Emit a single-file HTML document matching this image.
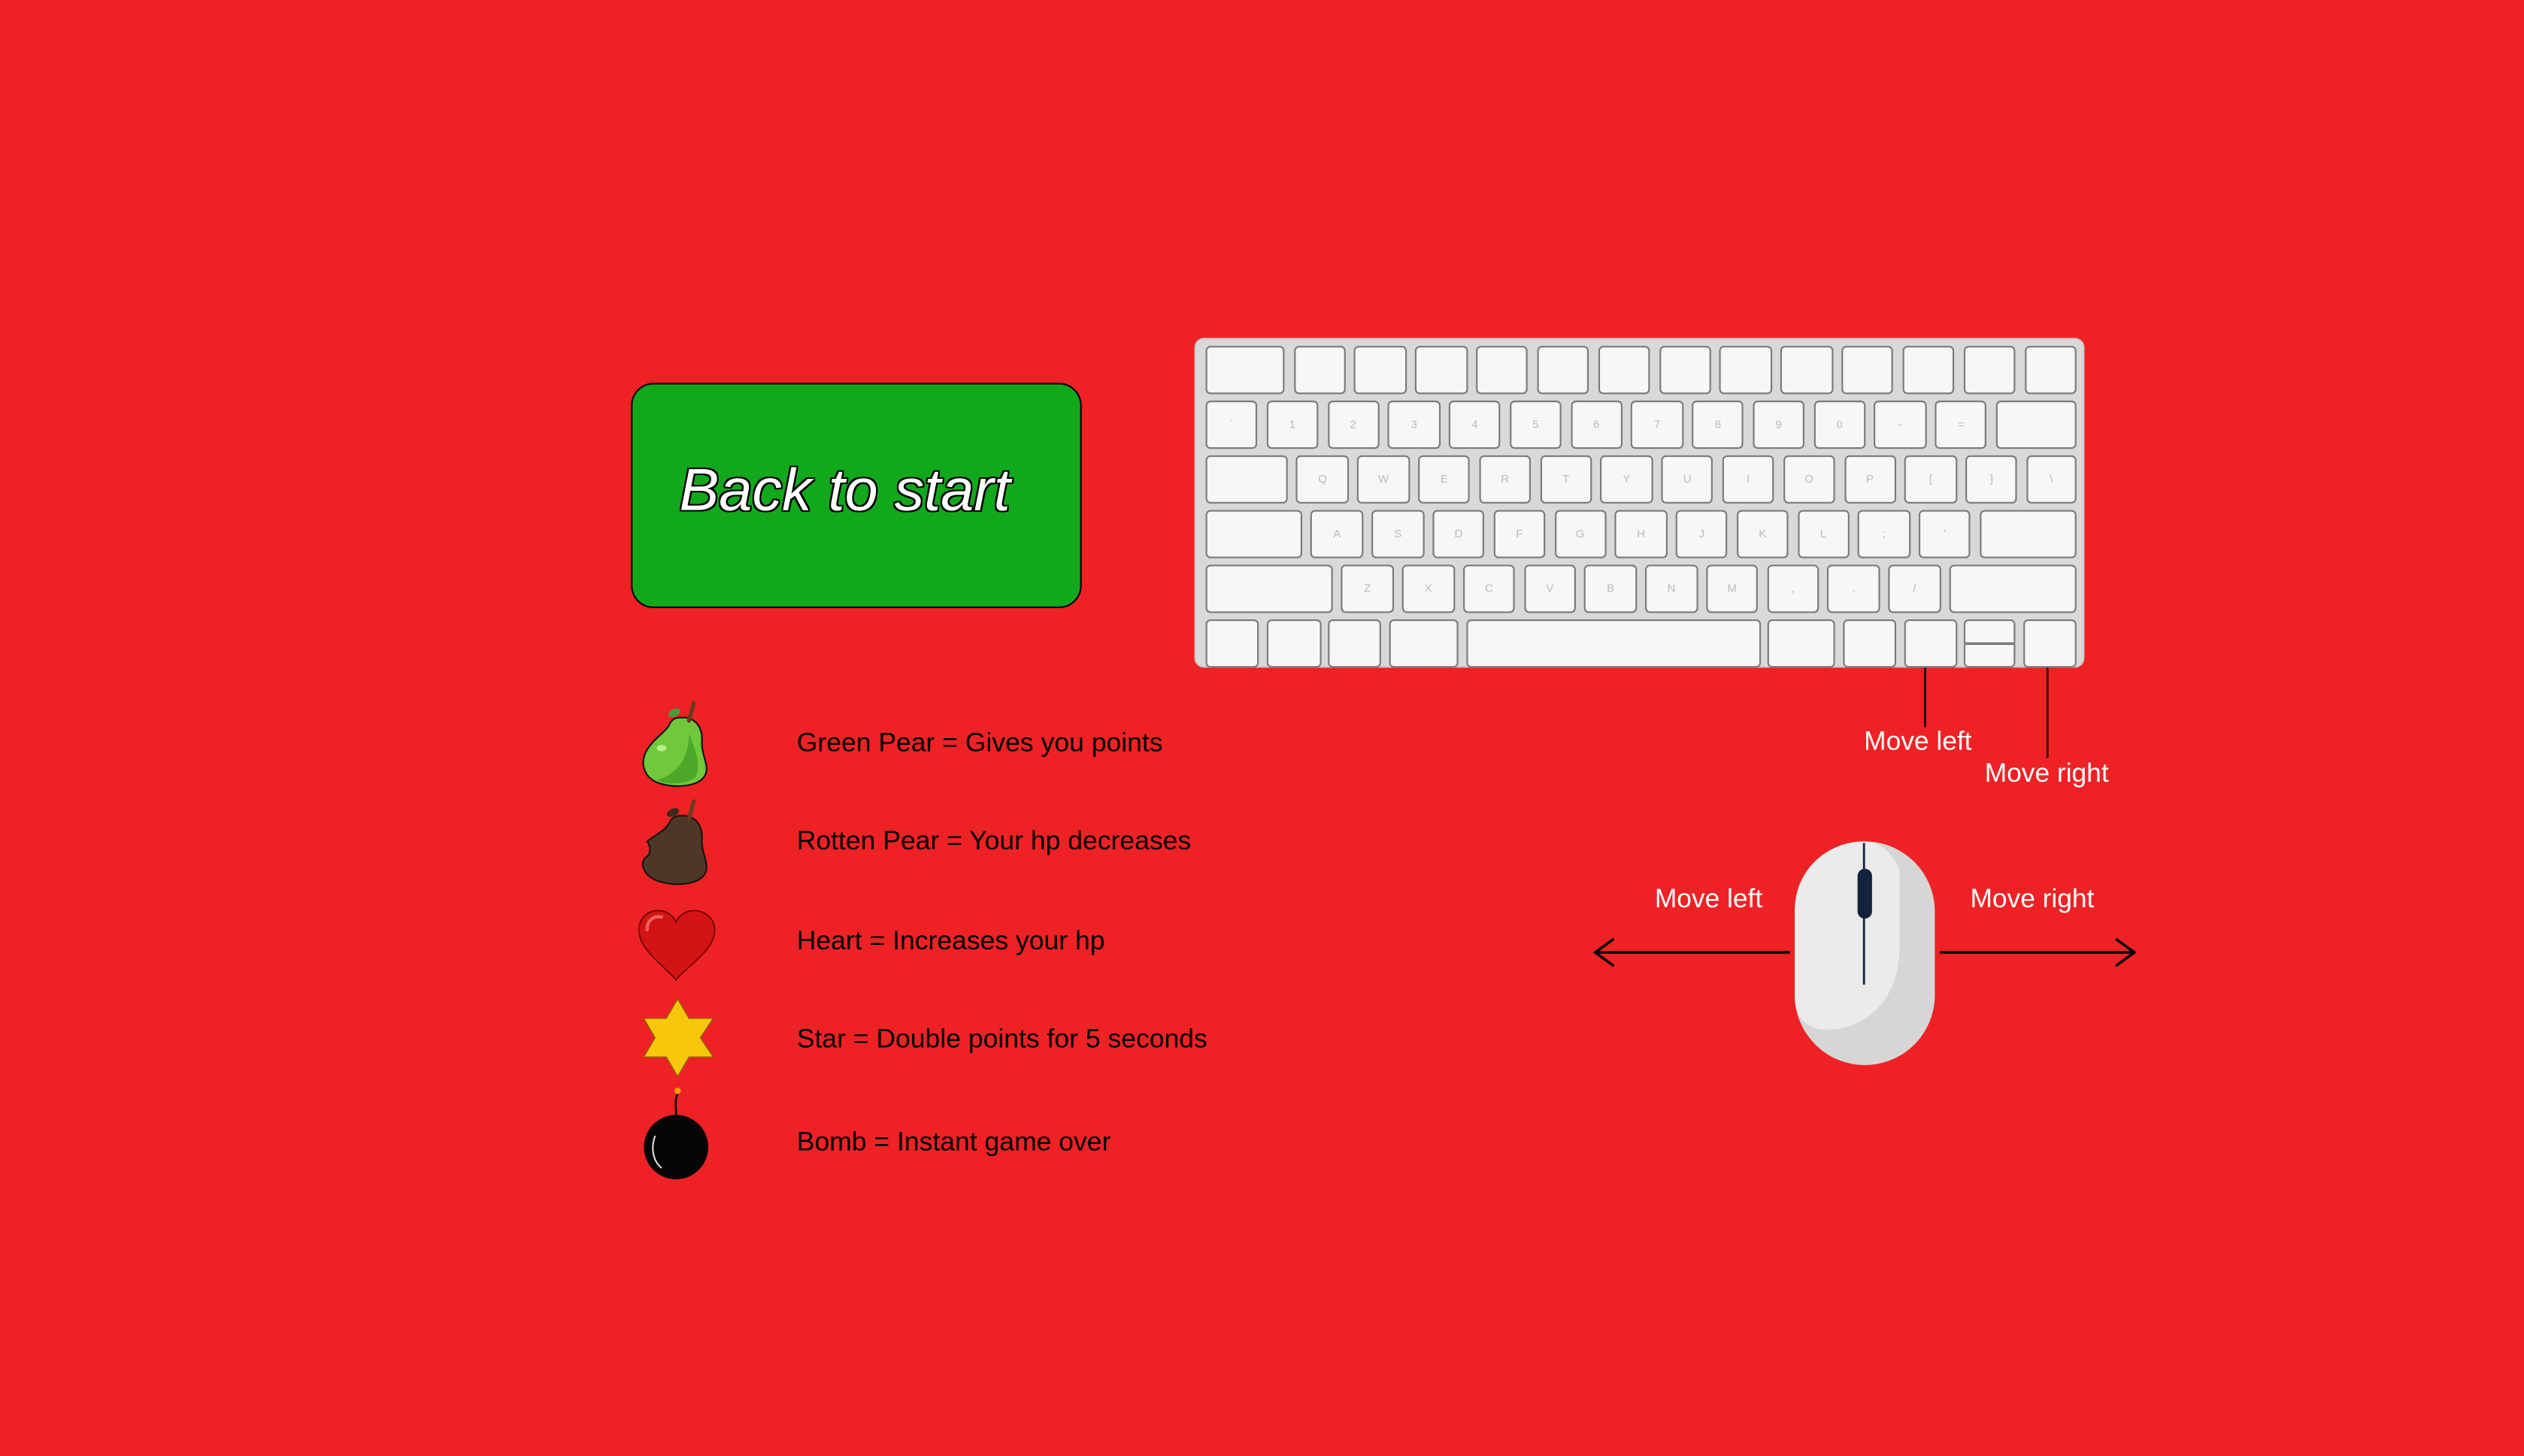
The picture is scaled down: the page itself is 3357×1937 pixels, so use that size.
<!DOCTYPE html>
<html><head><meta charset="utf-8"><style>
html,body{margin:0;padding:0;}
body{width:3357px;height:1937px;background:#ee2225;overflow:hidden;font-family:"Liberation Sans",Arial,sans-serif;}
#s{position:absolute;left:0;top:0;width:1568px;height:905px;transform:scale(2.1409,2.1403);transform-origin:0 0;}
.a{position:absolute;}
.btn{left:392px;top:238px;width:278px;height:138px;background:#12a81c;border:1px solid #000;border-radius:14px;}
.btn span{position:absolute;left:29px;top:45px;font-size:37px;font-style:italic;color:#fff;text-shadow:1px 1px 0 #000,-1px -1px 0 #000,1px -1px 0 #000,-1px 1px 0 #000,0 1px 0 #000,1px 0 0 #000,0 -1px 0 #000,-1px 0 0 #000;}
.t{font-size:16.6px;color:#000;left:495px;}
.w{font-size:16.5px;color:#fff;}
.kb{left:742px;top:210px;width:551px;height:203px;background:#d9d9d9;border:1px solid #c8c8c8;border-radius:6px;}
.row{position:absolute;left:6px;width:541px;height:30px;display:flex;justify-content:space-between;}
.k{background:#f7f7f7;border:1px solid #7a7a7a;border-radius:3px;box-sizing:border-box;height:30px;font-size:7px;color:#bbb;text-align:center;line-height:30px;}
.k.s{width:32.3px;}
</style></head><body><div id="s">
<div class="a btn"><span>Back to start</span></div>

<div class="a t" style="top:452px">Green Pear = Gives you points</div>
<div class="a t" style="top:513px">Rotten Pear = Your hp decreases</div>
<div class="a t" style="top:575px">Heart = Increases your hp</div>
<div class="a t" style="top:636px">Star = Double points for 5 seconds</div>
<div class="a t" style="top:700px">Bomb = Instant game over</div>

<svg class="a" style="left:0;top:0" width="1568" height="905" viewBox="0 0 1568 905">
 <g>
  <path d="M424,446 C432,446 437,452 436,462 C436,470 441,476 438,482 C434,489 420,490 410,487 C400,484 397,474 402,466 C407,458 414,455 416,450 C418,446 421,446 424,446 Z" fill="#6fc93a" stroke="#111" stroke-width="1"/>
  <path d="M428,456 C432,466 436,476 432,483 C426,488 414,488 408,485 C418,482 428,474 428,456Z" fill="#4da728"/>
  <ellipse cx="411" cy="465" rx="3" ry="2" fill="#b9ee8a"/>
  <line x1="428" y1="448" x2="431" y2="437" stroke="#6b3a1e" stroke-width="2.5" stroke-linecap="round"/>
  <ellipse cx="419" cy="443" rx="4" ry="2.3" fill="#4a9a3a" transform="rotate(-25 419 443)"/>
 </g>
 <g transform="translate(0,61)">
  <path d="M424,446 C432,446 437,452 436,462 C436,470 441,476 438,482 C434,489 420,490 410,487 C400,484 397,476 401,472 C405,470 404,464 402,462 C407,458 414,455 416,450 C418,446 421,446 424,446 Z" fill="#4d3827" stroke="#1a120b" stroke-width="1"/>
  <line x1="428" y1="448" x2="431" y2="437" stroke="#6b3a1e" stroke-width="2.5" stroke-linecap="round"/>
  <ellipse cx="418" cy="444" rx="4" ry="2.3" fill="#3d2a1c" transform="rotate(-25 418 444)"/>
 </g>
 <path d="M420,609 C410,598 397,590 397,578 C397,570 403,566 409,566 C414,566 418,569 420,573 C422,569 426,566 431,566 C438,566 444,571 444,578 C444,590 430,598 420,609Z" fill="#d41414" stroke="#6a0000" stroke-width="0.8"/>
 <path d="M402,578 C402,572 406,569 411,570" stroke="#f06060" stroke-width="2" fill="none" stroke-linecap="round"/>
 <path d="M421,621 L428,633 L443,633 L435,645 L443,657 L428,657 L421,669 L414,657 L400,657 L407,645 L400,633 L414,633 Z" fill="#f6c70a" stroke="#8a6a00" stroke-width="0.6"/>
 <circle cx="420" cy="713" r="20" fill="#050505"/>
 <path d="M407,706 C404,714 406,722 411,726" stroke="#ddd" stroke-width="1" fill="none"/>
 <path d="M420,693 C420,688 419,684 421,680" stroke="#000" stroke-width="1.2" fill="none"/>
 <circle cx="421" cy="678" r="2" fill="#ff9a00"/>
 <line x1="1196" y1="398" x2="1196" y2="452" stroke="#000" stroke-width="1.2"/>
 <line x1="1272" y1="396" x2="1272" y2="471" stroke="#000" stroke-width="1.2"/>
 <line x1="991" y1="592" x2="1112" y2="592" stroke="#000" stroke-width="1.6"/>
 <path d="M1002,584 L991,592 L1002,600" stroke="#000" stroke-width="1.6" fill="none" stroke-linecap="round"/>
 <line x1="1205" y1="592" x2="1326" y2="592" stroke="#000" stroke-width="1.6"/>
 <path d="M1315,584 L1326,592 L1315,600" stroke="#000" stroke-width="1.6" fill="none" stroke-linecap="round"/>
 <rect x="1115" y="523" width="87" height="139" rx="43.5" fill="#d6d6d6"/>
 <path d="M1158,523 C1136,523 1115,540 1115,566 L1115,620 C1115,632 1122,640 1135,640 C1160,640 1180,620 1180,590 L1180,540 C1175,530 1168,523 1158,523Z" fill="#ebebeb"/>
 <line x1="1158" y1="524" x2="1158" y2="612" stroke="#14233d" stroke-width="1.3"/>
 <rect x="1154" y="540" width="9" height="31" rx="4.5" fill="#14233d"/>
</svg>

<div class="a w" style="left:1158px;top:452px">Move left</div>
<div class="a w" style="left:1233px;top:472px">Move right</div>
<div class="a w" style="left:1028px;top:550px">Move left</div>
<div class="a w" style="left:1224px;top:550px">Move right</div>

<div class="a kb">
 <div class="row" style="top:4px"><div class="k" style="width:49px"></div><div class="k s"></div><div class="k s"></div><div class="k s"></div><div class="k s"></div><div class="k s"></div><div class="k s"></div><div class="k s"></div><div class="k s"></div><div class="k s"></div><div class="k s"></div><div class="k s"></div><div class="k s"></div><div class="k s"></div></div>
 <div class="row" style="top:38px"><div class="k s">`</div><div class="k s">1</div><div class="k s">2</div><div class="k s">3</div><div class="k s">4</div><div class="k s">5</div><div class="k s">6</div><div class="k s">7</div><div class="k s">8</div><div class="k s">9</div><div class="k s">0</div><div class="k s">-</div><div class="k s">=</div><div class="k" style="width:50px"></div></div>
 <div class="row" style="top:72px"><div class="k" style="width:51px"></div><div class="k s">Q</div><div class="k s">W</div><div class="k s">E</div><div class="k s">R</div><div class="k s">T</div><div class="k s">Y</div><div class="k s">U</div><div class="k s">I</div><div class="k s">O</div><div class="k s">P</div><div class="k s">[</div><div class="k s">]</div><div class="k" style="width:31px">\</div></div>
 <div class="row" style="top:106px"><div class="k" style="width:60px"></div><div class="k s">A</div><div class="k s">S</div><div class="k s">D</div><div class="k s">F</div><div class="k s">G</div><div class="k s">H</div><div class="k s">J</div><div class="k s">K</div><div class="k s">L</div><div class="k s">;</div><div class="k s">'</div><div class="k" style="width:60px"></div></div>
 <div class="row" style="top:140px"><div class="k" style="width:79px"></div><div class="k s">Z</div><div class="k s">X</div><div class="k s">C</div><div class="k s">V</div><div class="k s">B</div><div class="k s">N</div><div class="k s">M</div><div class="k s">,</div><div class="k s">.</div><div class="k s">/</div><div class="k" style="width:79px"></div></div>
 <div class="row" style="top:174px"><div class="k" style="width:33px"></div><div class="k" style="width:34px"></div><div class="k" style="width:33px"></div><div class="k" style="width:43px"></div><div class="k" style="width:183px"></div><div class="k" style="width:42px"></div><div class="k" style="width:33px"></div><div class="k" style="width:33px"></div><div class="k" style="width:32px;background:linear-gradient(#f7f7f7 47%,#7a7a7a 47%,#7a7a7a 53%,#f7f7f7 53%)"></div><div class="k" style="width:33px"></div></div>
</div>
</div></body></html>
